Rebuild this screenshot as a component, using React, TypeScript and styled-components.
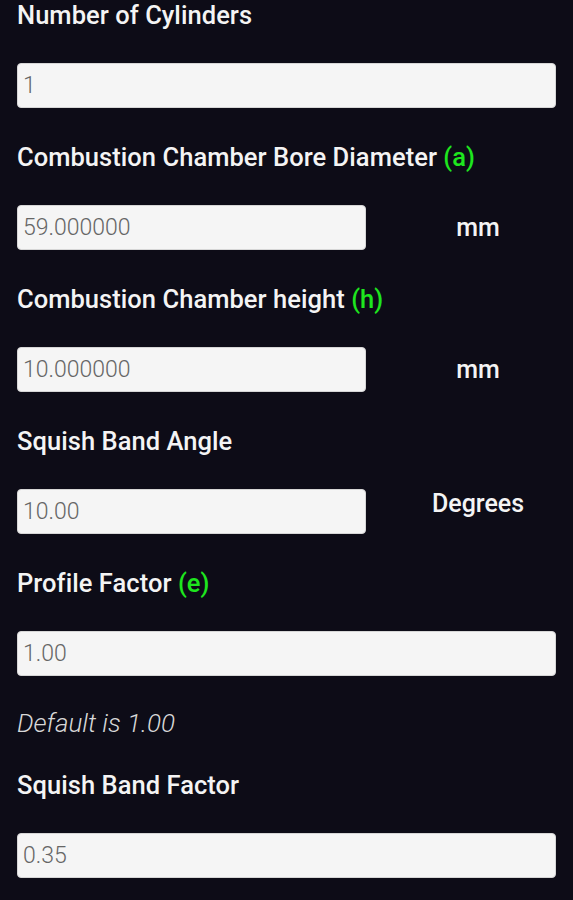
import React from "react";
import styled, { createGlobalStyle } from "styled-components";

const GlobalStyle = createGlobalStyle`
  html, body {
    margin: 0;
    padding: 0;
    background-color: #0d0c17;
  }
  body {
    font-family: Roboto, "Liberation Sans", sans-serif;
  }
`;

const Page = styled.div`
  width: 573px;
  height: 900px;
  display: flex;
  flex-direction: column;
  background-color: #0d0c17;
  overflow: hidden;
`;

const Form = styled.div`
  flex: 1;
  display: flex;
  flex-direction: column;
  padding: 0 17px;
`;

const Label = styled.div`
  height: 30px;
  line-height: 30px;
  font-size: 25.5px;
  font-weight: 500;
  letter-spacing: 0.05px;
  color: #f4f4f4;
  white-space: nowrap;
  margin-bottom: 33px;
`;

const Variable = styled.span`
  color: #1ee61e;
`;

const Row = styled.div`
  display: flex;
  margin-bottom: 34px;
`;

const Input = styled.input<{ $short?: boolean }>`
  box-sizing: border-box;
  width: ${(p) => (p.$short ? "349px" : "100%")};
  height: 45px;
  padding: 0 5px;
  border: 1px solid #d6d6d6;
  border-radius: 4px;
  background-color: #f5f5f5;
  font-family: Roboto, "Liberation Sans", sans-serif;
  font-size: 23px;
  font-weight: 300;
  color: #666666;
  outline: none;
`;

const Unit = styled.div<{ $raised?: boolean }>`
  flex: 1;
  display: flex;
  justify-content: center;
  align-items: ${(p) => (p.$raised ? "flex-start" : "center")};
  padding-left: 34px;
  font-size: 25px;
  font-weight: 500;
  color: #f4f4f4;
`;

const Hint = styled.div`
  height: 94px;
  margin-top: -34px;
  display: flex;
  align-items: center;
  font-size: 26px;
  font-weight: 300;
  font-style: italic;
  color: #d8d8d8;
`;

const Footer = styled.div`
  height: 4px;
  background-color: #1e1f26;
`;

interface FieldProps {
  label: string;
  variable?: string;
  value: string;
  unit?: string;
  raised?: boolean;
}

const Field: React.FC<FieldProps> = ({ label, variable, value, unit, raised }) => (
  <>
    <Label>
      {label}
      {variable && <Variable> ({variable})</Variable>}
    </Label>
    <Row>
      <Input $short={!!unit} defaultValue={value} readOnly />
      {unit && <Unit $raised={raised}>{unit}</Unit>}
    </Row>
  </>
);

export default function App() {
  return (
    <Page>
      <GlobalStyle />
      <Form>
        <Field label="Number of Cylinders" value="1" />
        <Field
          label="Combustion Chamber Bore Diameter"
          variable="a"
          value="59.000000"
          unit="mm"
        />
        <Field
          label="Combustion Chamber height"
          variable="h"
          value="10.000000"
          unit="mm"
        />
        <Field label="Squish Band Angle" value="10.00" unit="Degrees" raised />
        <Field label="Profile Factor" variable="e" value="1.00" />
        <Hint>Default is 1.00</Hint>
        <Field label="Squish Band Factor" value="0.35" />
      </Form>
      <Footer />
    </Page>
  );
}
